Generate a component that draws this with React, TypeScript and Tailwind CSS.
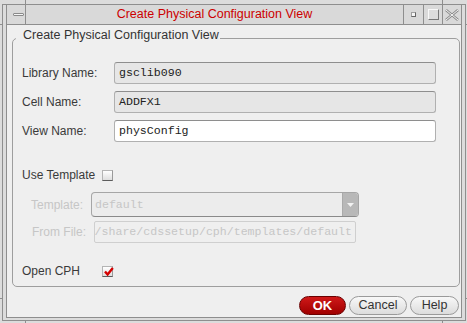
const sans = "font-['Liberation_Sans',Arial,Helvetica,sans-serif]";
const mono = "font-['Liberation_Mono','Courier_New',monospace]";

const Checkbox = ({ checked }: { checked?: boolean }) => (
  <div className="relative w-[11px] h-[11px] border border-[#b4b4b4] border-b-[#5c5c5c] border-r-[#9a9a9a] bg-gradient-to-b from-[#ffffff] to-[#dedede]">
    {checked && (
      <svg className="absolute left-[1px] top-[0px]" width="10" height="9" viewBox="0 0 10 9">
        <path d="M1 4.5 L3.6 7.5 L8.8 1" fill="none" stroke="#d40000" strokeWidth="2.4" />
      </svg>
    )}
  </div>
);

const Field = ({ value, white }: { value: string; white?: boolean }) => (
  <div
    className={`w-[322px] h-[22px] rounded-[3px] border border-[#b0b0b0] border-t-[#8e8e8e] flex items-center pl-[4px] ${mono} text-[11.6px] text-[#222] ${
      white ? "bg-white" : "bg-[#e6e6e6]"
    }`}
  >
    {value}
  </div>
);

export default function App() {
  return (
    <div className={`relative w-[467px] h-[323px] bg-[#dcdcdc] pl-[2px] pt-[4px] pb-[2px] ${sans}`}>
      {/* frame corner handles */}
      <div className="absolute left-[25px] top-0 w-px h-[4px] bg-[#8e8e8e]" />
      <div className="absolute left-[442px] top-0 w-px h-[4px] bg-[#8e8e8e]" />
      <div className="absolute left-[25px] bottom-0 w-px h-[2px] bg-[#8e8e8e]" />
      <div className="absolute left-[442px] bottom-0 w-px h-[2px] bg-[#8e8e8e]" />
      <div className="absolute left-0 top-[24px] w-[2px] h-px bg-[#8e8e8e]" />
      <div className="absolute right-0 top-[24px] w-[2px] h-px bg-[#8e8e8e]" />
      <div className="absolute left-0 top-[298px] w-[2px] h-px bg-[#8e8e8e]" />
      <div className="absolute right-0 top-[298px] w-[2px] h-px bg-[#8e8e8e]" />

      <div className="w-[464px] h-[317px] border border-[#8e8e8e] px-[3px] pb-[2px] bg-[#dcdcdc]">
        <div className="h-full flex flex-col border-l border-r border-b border-[#8e8e8e]">
          {/* title bar */}
          <div className="h-[20px] flex border-b border-[#8e8e8e] bg-[#d9d9d9]">
            <div className="w-[19px] border-r border-[#8e8e8e] flex items-center justify-center">
              <div className="w-[11px] h-[3px] rounded-[1px] border border-[#8a8a8a] bg-[#f4f4f4] ml-[4px]" />
            </div>
            <div className="flex-1 flex items-center justify-center text-[12.5px] text-[#cc0000] leading-none">
              Create Physical Configuration View
            </div>
            <div className="w-[20px] border-l border-[#8e8e8e] flex items-center justify-center">
              <div className="w-[5px] h-[5px] bg-[#f6f6f6] border border-[#a0a0a0] border-b-[#666] border-r-[#666]" />
            </div>
            <div className="w-[19px] border-l border-[#8e8e8e] flex items-center justify-center">
              <div className="w-[11px] h-[11px] border border-[#f8f8f8] border-b-[#777] border-r-[#777] bg-[#dcdcdc]" />
            </div>
            <div className="w-[19px] border-l border-[#8e8e8e] flex items-center justify-center">
              <svg width="14" height="12" viewBox="0 0 14 12">
                <path d="M1 1 L13 11 M13 1 L1 11" stroke="#8a8a8a" strokeWidth="2.6" />
                <path d="M1 1 L13 11 M13 1 L1 11" stroke="#f4f4f4" strokeWidth="1" />
              </svg>
            </div>
          </div>

          {/* content */}
          <div className="flex-1 flex flex-col bg-[#efefef] pl-[5px] pr-[1px] pt-[3px]">
            <fieldset className="border border-[#9e9e9e] rounded-[5px] min-w-0">
              <legend className="ml-[3px] pl-[7px] pr-[1px] pb-[5px] text-[12.5px] leading-[15px] text-[#333]">
                Create Physical Configuration View
              </legend>
              <div className="flex flex-col pl-[9px] pt-[14px] pb-[8px] text-[12px] text-[#3a3a3a]">
                <div className="flex items-center h-[22px]">
                  <div className="w-[92px]">Library Name:</div>
                  <Field value="gsclib090" />
                </div>
                <div className="flex items-center h-[22px] mt-[7px]">
                  <div className="w-[92px]">Cell Name:</div>
                  <Field value="ADDFX1" />
                </div>
                <div className="flex items-center h-[22px] mt-[7px]">
                  <div className="w-[92px]">View Name:</div>
                  <Field value="physConfig" white />
                </div>

                <div className="flex items-center h-[14px] mt-[26px]">
                  <div className="w-[80px]">Use Template</div>
                  <Checkbox />
                </div>

                <div className="flex items-center h-[25px] mt-[10px]">
                  <div className="w-[69px] pl-[9px] text-[#c6c6c6]">Template:</div>
                  <div className="w-[268px] h-[25px] flex rounded-[4px] border border-[#a6a6a6] border-b-[#8a8a8a] overflow-hidden bg-[#ececec]">
                    <div className={`flex-1 flex items-center pl-[3px] ${mono} text-[11.6px] text-[#c6c6c6]`}>default</div>
                    <div className="w-[16px] bg-[#b8b8b8] border-l border-[#aaaaaa] flex items-center justify-center">
                      <svg width="7" height="4" viewBox="0 0 7 4">
                        <path d="M0 0 L7 0 L3.5 4 Z" fill="#f2f2f2" />
                      </svg>
                    </div>
                  </div>
                </div>

                <div className="flex items-center h-[22px] mt-[4px]">
                  <div className="w-[72px] pl-[10px] text-[#c6c6c6]">From File:</div>
                  <div className={`w-[262px] h-[22px] rounded-[2px] border border-[#cfcfcf] flex items-center justify-end overflow-hidden whitespace-nowrap pr-[3px] ${mono} text-[11.6px] text-[#c6c6c6]`}>
                    /share/cdssetup/cph/templates/default
                  </div>
                </div>

                <div className="flex items-center h-[14px] mt-[21px]">
                  <div className="w-[80px]">Open CPH</div>
                  <Checkbox checked />
                </div>
              </div>
            </fieldset>

            <div className="flex justify-end gap-[3px] mt-[9px] pr-[1px]">
              <div className="w-[47px] h-[19px] rounded-full border border-[#6a0000] bg-gradient-to-b from-[#d01818] to-[#a00000] flex items-center justify-center text-white font-bold text-[13px] leading-none">
                OK
              </div>
              <div className="w-[58px] h-[19px] rounded-full border border-[#9a9a9a] bg-gradient-to-b from-[#f8f8f8] to-[#dcdcdc] flex items-center justify-center text-[#333] text-[12.5px] leading-none">
                Cancel
              </div>
              <div className="w-[49px] h-[19px] rounded-full border border-[#9a9a9a] bg-gradient-to-b from-[#f8f8f8] to-[#dcdcdc] flex items-center justify-center text-[#333] text-[12.5px] leading-none">
                Help
              </div>
            </div>
          </div>
        </div>
      </div>
    </div>
  );
}
